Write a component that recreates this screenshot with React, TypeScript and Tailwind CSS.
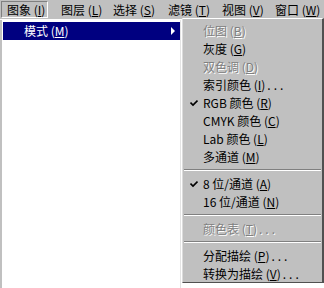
import React from 'react';

type Item =
  | { kind: 'item'; label: string; key: string; tail?: string; disabled?: boolean; checked?: boolean }
  | { kind: 'sep' };

const topMenu = [
  { label: '图象', key: 'I', w: 'w-[54px]', active: true },
  { label: '图层', key: 'L', w: 'w-[52px]' },
  { label: '选择', key: 'S', w: 'w-[55px]' },
  { label: '滤镜', key: 'T', w: 'w-[54px]' },
  { label: '视图', key: 'V', w: 'w-[53px]' },
  { label: '窗口', key: 'W', w: 'w-[55px]' },
];

const modeItems: Item[] = [
  { kind: 'item', label: '位图', key: 'B', disabled: true },
  { kind: 'item', label: '灰度', key: 'G' },
  { kind: 'item', label: '双色调', key: 'D', disabled: true },
  { kind: 'item', label: '索引颜色', key: 'I', tail: '...' },
  { kind: 'item', label: 'RGB 颜色', key: 'R', checked: true },
  { kind: 'item', label: 'CMYK 颜色', key: 'C' },
  { kind: 'item', label: 'Lab 颜色', key: 'L' },
  { kind: 'item', label: '多通道', key: 'M' },
  { kind: 'sep' },
  { kind: 'item', label: '8 位/通道', key: 'A', checked: true },
  { kind: 'item', label: '16 位/通道', key: 'N' },
  { kind: 'sep' },
  { kind: 'item', label: '颜色表', key: 'T', tail: '...', disabled: true },
  { kind: 'sep' },
  { kind: 'item', label: '分配描绘', key: 'P', tail: '...' },
  { kind: 'item', label: '转换为描绘', key: 'V', tail: '...' },
];

const Check = () => (
  <svg width="8" height="8" viewBox="0 0 8 8" className="absolute left-[7px] top-[5px]">
    <path d="M0.5 3.5 L3 6 L7.5 1.5" stroke="#000" strokeWidth="1.6" fill="none" />
  </svg>
);

const App: React.FC = () => {
  return (
    <div
      className="relative w-[324px] h-[288px] bg-white overflow-hidden text-[12px] leading-[12px] text-black"
      style={{ fontFamily: '"Noto Sans CJK SC", "Liberation Sans", sans-serif' }}
    >
      {/* Menu bar */}
      <div className="flex h-[20px] bg-[#c0c0c0] pl-[1px] pt-[1px] border-b border-white">
        {topMenu.map((m) => (
          <div key={m.key} className={`${m.w} h-[17px] flex items-center`}>
            {m.active ? (
              <div className="h-[17px] w-[47px] flex items-center pl-[5px] border border-t-[#808080] border-l-[#808080] border-r-white border-b-white">
                {m.label} (<u>{m.key}</u>)
              </div>
            ) : (
              <span className="pl-[6px] whitespace-nowrap">
                {m.label} (<u>{m.key}</u>)
              </span>
            )}
          </div>
        ))}
      </div>

      {/* Left menu panel */}
      <div className="h-[268px] w-[181px] border-l-2 border-[#c0c0c0] border-r border-r-[#e4e4e4] pt-[2px]">
        <div className="relative ml-[1px] h-[18px] w-[177px] bg-[#000080] text-white flex items-center pl-[21px]">
          模式 (<u>M</u>)
          <svg width="5" height="8" viewBox="0 0 5 8" className="absolute right-[4px] top-[5px]">
            <path d="M0 0 L4 4 L0 8 Z" fill="#fff" />
          </svg>
        </div>
      </div>

      {/* Mode submenu */}
      <div className="absolute left-[182px] top-[18px] w-[142px] h-[265px] bg-[#c0c0c0] border-t border-t-white border-l border-l-[#dcdcdc] border-r-2 border-r-[#505050] border-b border-b-[#505050] pt-[3px]">
        {modeItems.map((it, i) =>
          it.kind === 'sep' ? (
            <div key={i} className="h-[9px] pt-[3px] px-[1px]">
              <div className="h-[1px] bg-[#808080]" />
              <div className="h-[1px] bg-white" />
            </div>
          ) : (
            <div
              key={i}
              className={`relative h-[18px] flex items-center pl-[20px] whitespace-nowrap ${
                it.disabled ? 'text-[#808080] [text-shadow:1px_1px_0_#fff]' : ''
              }`}
            >
              {it.checked && <Check />}
              {it.label} (<u>{it.key}</u>)
              {it.tail && <span className="pl-[2px] tracking-[3px]">{it.tail}</span>}
            </div>
          )
        )}
      </div>
    </div>
  );
};

export default App;
